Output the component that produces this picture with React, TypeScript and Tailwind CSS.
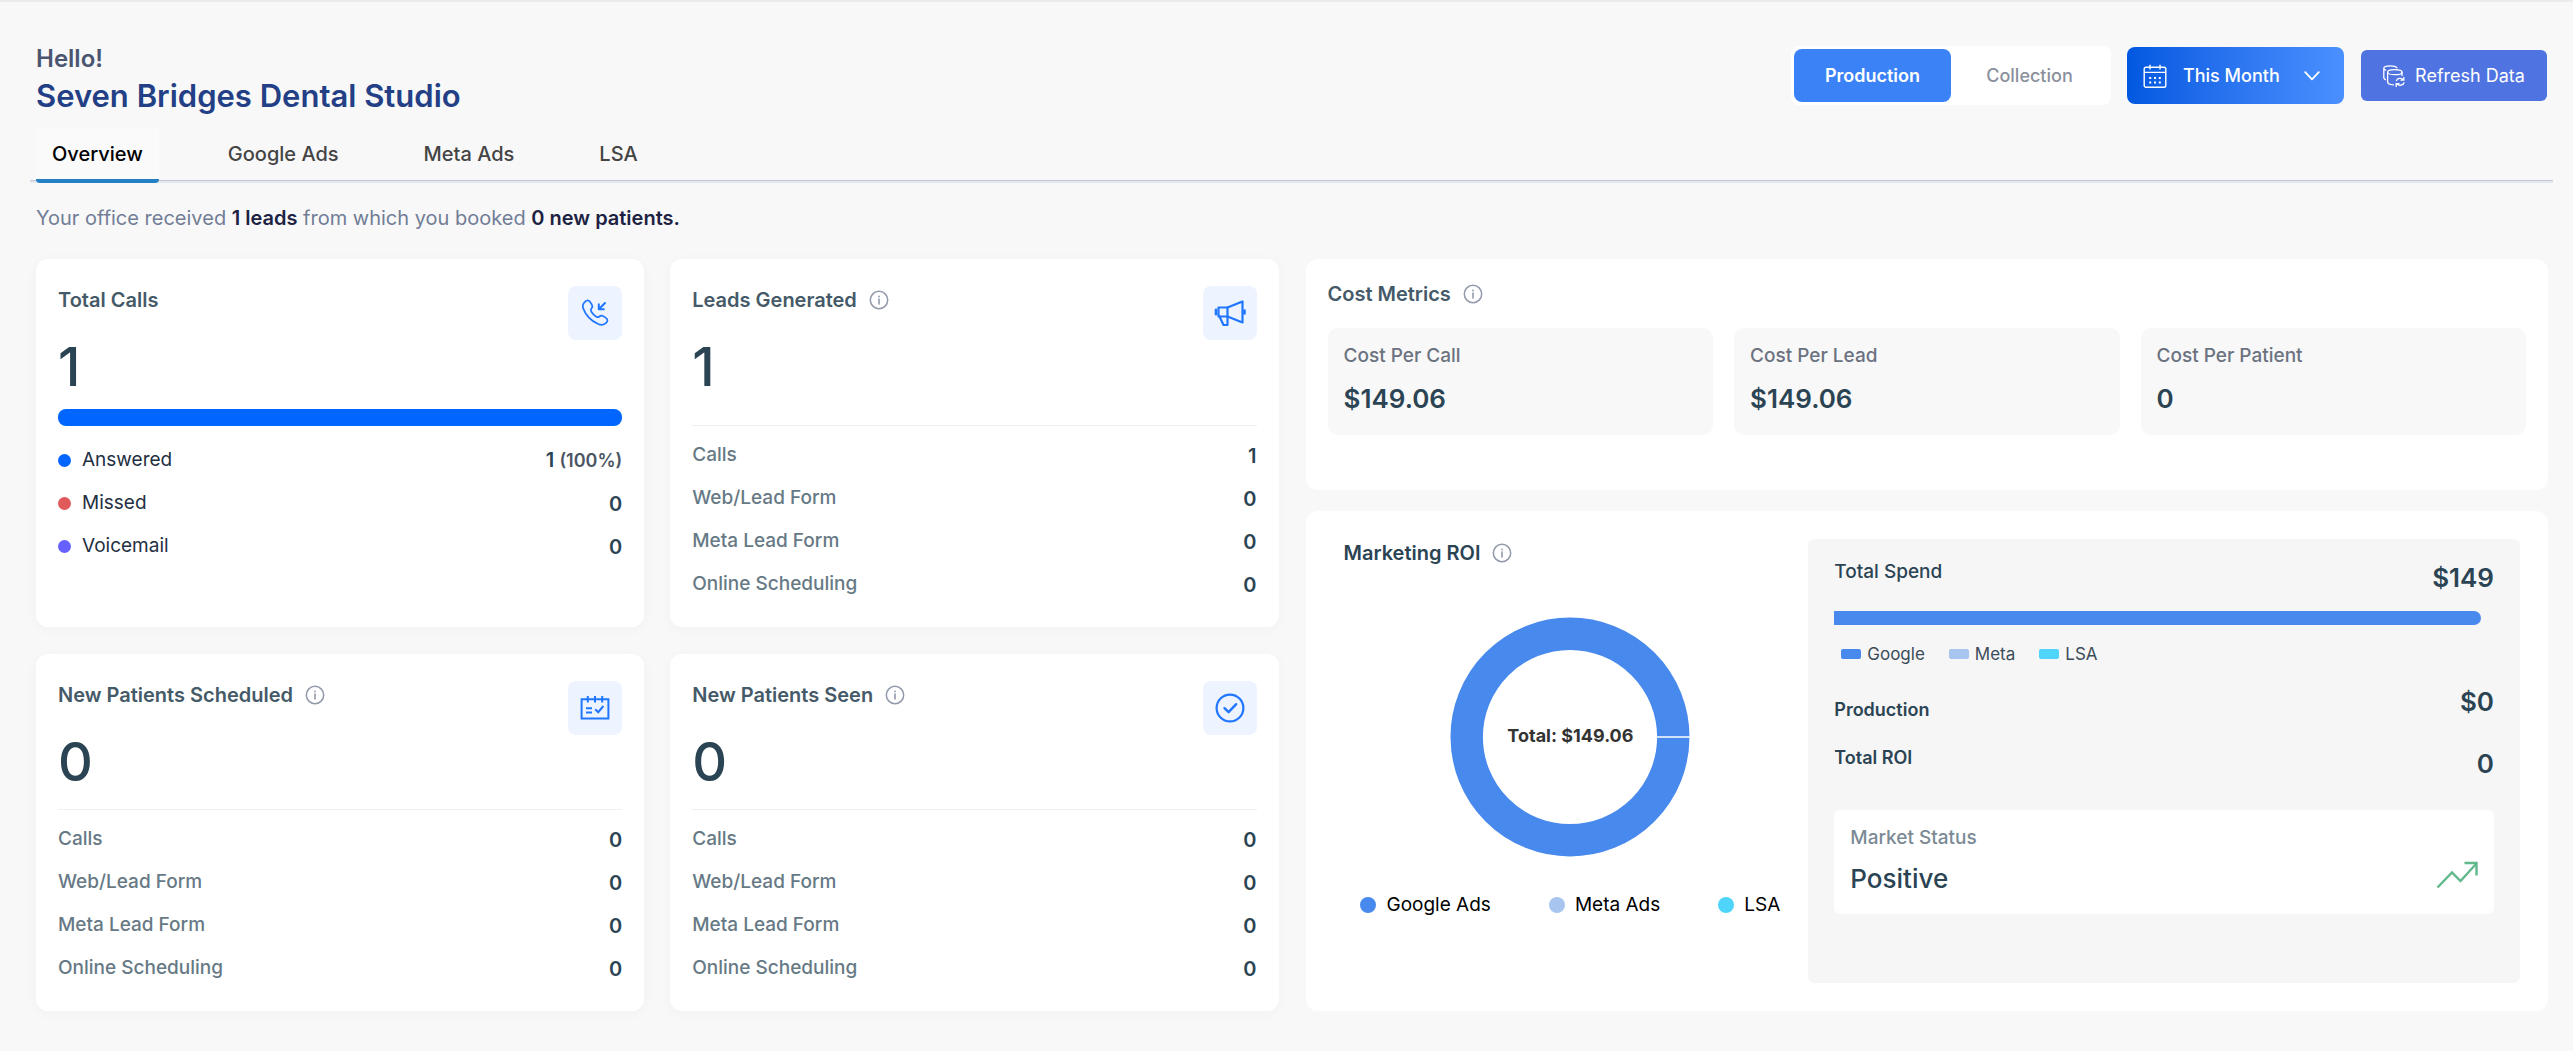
import React, { useState } from "react";

function InfoIcon() {
  return (
    <svg className="size-5 shrink-0 text-[#9299aa]" viewBox="0 0 20 20" fill="none" stroke="currentColor" aria-hidden="true">
      <circle cx="10" cy="10" r="8.7" strokeWidth="1.5" />
      <path d="M10 9v5" strokeWidth="1.6" strokeLinecap="round" />
      <circle cx="10" cy="6.4" r="0.9" fill="currentColor" stroke="none" />
    </svg>
  );
}

function PhoneIcon() {
  return (
    <svg className="size-[30px]" viewBox="0 0 30 30" fill="none" stroke="currentColor" strokeWidth="1.7" strokeLinecap="round" strokeLinejoin="round" aria-hidden="true">
      <path d="M5.2 3.6C6.7 1.9 8.6 1.9 9.8 3.6L11.9 6.7C12.8 8.1 12.5 9.2 11.5 10.4C10.5 11.5 10.5 12.3 11.2 13.5C12.6 15.9 14.4 17.7 16.6 18.9C17.8 19.5 18.4 19.4 19.4 18.5C20.6 17.4 21.9 17.2 23.3 18.1L26.2 20.1C27.9 21.3 27.8 23.2 26.4 24.6C24.3 26.8 21.3 27.4 18.2 26C10.9 22.8 5.6 16.9 3.1 10.1C2.2 7.6 3.3 5.3 5.2 3.6Z" />
      <path d="M25 5L19 11M18.8 6.2V11.2H23.8" strokeWidth="2" />
    </svg>
  );
}

function MegaphoneIcon() {
  return (
    <svg className="size-8" viewBox="0 0 32 32" fill="none" stroke="currentColor" strokeWidth="2.2" strokeLinejoin="round" strokeLinecap="round" aria-hidden="true">
      <path d="M13.5 10.5L28.5 4.5V25.5L13.5 19.5Z" />
      <path d="M13.5 10.5H4.5V19.5H13.5" />
      <path d="M5.5 19.5L9.5 28H13.5V19.5" />
      <path d="M2 12.8V17.2M30.5 13.5V16.5" strokeWidth="2.6" />
    </svg>
  );
}

function ScheduleIcon() {
  return (
    <svg className="size-[30px]" viewBox="0 0 30 30" fill="none" stroke="currentColor" strokeWidth="2" aria-hidden="true">
      <path d="M1.6 6.2H28.4V25.4H1.6Z" />
      <path d="M7.8 3V9.4M15 3V9.4M22.2 3V9.4" />
      <path d="M6 15.2H12M6 19.4H12M15.2 16.2L18.2 19.2L23.4 13" />
    </svg>
  );
}

function CheckCircleIcon() {
  return (
    <svg className="size-[30px]" viewBox="0 0 30 30" fill="none" stroke="currentColor" strokeWidth="2.2" strokeLinecap="round" strokeLinejoin="round" aria-hidden="true">
      <circle cx="15" cy="15" r="13.4" />
      <path d="M9.5 15.2L13.6 19.2L21.2 11.2" strokeWidth="2.4" />
    </svg>
  );
}

function CalendarIcon() {
  return (
    <svg className="size-6" viewBox="0 0 24 24" fill="none" stroke="currentColor" strokeWidth="1.4" aria-hidden="true">
      <rect x="1.2" y="3.2" width="21.6" height="20" rx="1.8" />
      <path d="M1.2 8.4H22.8M7 0.8V5.6M17 0.8V5.6" />
      <path d="M6.2 14H8.2M11 14H13M15.8 14H17.8M6.2 18.4H8.2M11 18.4H13M15.8 18.4H17.8" strokeWidth="2" />
    </svg>
  );
}

function RefreshDataIcon() {
  return (
    <svg className="size-[22px]" viewBox="0 0 22 22" fill="none" stroke="currentColor" strokeWidth="1.3" strokeLinecap="round" aria-hidden="true">
      <path d="M2.4 14.6C1.2 14 0.8 13.4 0.8 12.6V3.2C0.8 1.8 3.6 0.8 7.2 0.8C10.6 0.8 13.2 1.6 14 2.8M0.8 3.2C0.8 4 1.4 4.8 2.6 5.2" />
      <ellipse cx="11.8" cy="7.2" rx="7.2" ry="2.5" />
      <path d="M4.6 7.2V17C4.6 18.4 7 19.6 10.4 19.8M19 7.2V10.4" />
      <path d="M13.4 15.6C14.2 13.2 18.4 12.4 20.4 14.8M20.8 12.4V15.2H18M21 17.8C20.2 20.4 16.2 21.2 14 18.8M13.2 21.4V18.6H16" />
    </svg>
  );
}

function TrendIcon() {
  return (
    <svg className="h-7 w-[42px] text-[#60b88c]" viewBox="0 0 42 28" fill="none" stroke="currentColor" strokeWidth="2.4" aria-hidden="true">
      <path d="M1.5 26.5L16 11.5L24.5 20L40 3" />
      <path d="M28.5 2H40.5V14.5" />
    </svg>
  );
}

const tabs = ["Overview", "Google Ads", "Meta Ads", "LSA"];

type Entry = { label: string; value: string };

function StatHeader({ title, value, info, icon }: { title: string; value: string; info?: boolean; icon: React.ReactNode }) {
  return (
    <>
      <div className="flex items-start justify-between">
        <h2 className="flex items-center gap-3 text-[20px] leading-7 font-semibold text-[#455a68]">
          {title}
          {info && <InfoIcon />}
        </h2>
        <div className="flex size-[54px] items-center justify-center rounded-lg bg-[#edf4ff] text-[#2176ff]">{icon}</div>
      </div>
      <p className="text-[54px] leading-[54px] font-medium text-[#2b4454]">{value}</p>
    </>
  );
}

const cardClass = "flex flex-col rounded-xl bg-white px-[22px] pt-[27px] pb-5 shadow-[0_2px_14px_rgba(0,0,0,0.03)]";

function LeadCard({ title, value, entries, icon, spacer }: { title: string; value: string; entries: Entry[]; icon: React.ReactNode; spacer: string }) {
  return (
    <section className={cardClass}>
      <StatHeader title={title} value={value} info icon={icon} />
      <dl className={`${spacer} border-t border-[#eeeff0] pt-2 pb-px`}>
        {entries.map((e) => (
          <div key={e.label} className="flex h-[43px] items-center justify-between">
            <dt className="text-[19px] font-medium text-[#667985]">{e.label}</dt>
            <dd className="text-[20px] leading-7 font-semibold text-[#2b4454]">{e.value}</dd>
          </div>
        ))}
      </dl>
    </section>
  );
}

const makeEntries = (calls: string): Entry[] => [
  { label: "Calls", value: calls },
  { label: "Web/Lead Form", value: "0" },
  { label: "Meta Lead Form", value: "0" },
  { label: "Online Scheduling", value: "0" },
];

function CallRow({ dot, label, value, share }: { dot: string; label: string; value: string; share?: string }) {
  return (
    <div className="flex h-[43px] items-center justify-between">
      <dt className="flex items-center gap-[11px] text-[19px] text-[#232f42]">
        <span className={`size-[13px] rounded-full ${dot}`} />
        {label}
      </dt>
      <dd className="text-[20px] leading-7 font-semibold text-[#2b4454]">
        {value} {share && <span className="text-[18px] text-[#4b5563]">{share}</span>}
      </dd>
    </div>
  );
}

const costs: Entry[] = [
  { label: "Cost Per Call", value: "$149.06" },
  { label: "Cost Per Lead", value: "$149.06" },
  { label: "Cost Per Patient", value: "0" },
];

const chartLegend = [
  { label: "Google Ads", short: "Google", color: "bg-[#4889ed]" },
  { label: "Meta Ads", short: "Meta", color: "bg-[#a8c5ef]" },
  { label: "LSA", short: "LSA", color: "bg-[#50d5fa]" },
];

export default function App() {
  const [tab, setTab] = useState("Overview");
  const [mode, setMode] = useState("Production");

  return (
    <div className="min-h-screen border-t-2 border-[#ebebeb] bg-[#f8f8f8] pb-10 font-['Inter',sans-serif]">
      <header className="flex items-start justify-between pt-[43px] pr-[26px] pl-9">
        <div>
          <p className="text-[24px] leading-7 font-semibold text-[#4a5570]">Hello!</p>
          <h1 className="mt-[3px] text-[31px] leading-10 font-semibold text-[#233f85]">Seven Bridges Dental Studio</h1>
        </div>
        <div className="mt-px flex items-center">
          <div className="flex h-[59px] items-center rounded-lg bg-white p-[3px] text-[18px]">
            {["Production", "Collection"].map((m) => (
              <button
                key={m}
                type="button"
                onClick={() => setMode(m)}
                className={`h-[53px] w-[157px] rounded-lg ${mode === m ? "bg-[#3b82f6] font-semibold text-white" : "font-medium text-[#8a909c]"}`}
              >
                {m}
              </button>
            ))}
          </div>
          <button type="button" className="ml-4 flex h-[57px] w-[217px] items-center rounded-lg bg-linear-to-r from-[#0058e0] to-[#4a90ff] px-4 text-[18px] font-medium text-white">
            <CalendarIcon />
            <span className="ml-4">This Month</span>
            <svg className="mr-2 ml-auto h-[10px] w-4" viewBox="0 0 16 10" fill="none" stroke="currentColor" strokeWidth="1.8" strokeLinecap="round" strokeLinejoin="round" aria-hidden="true">
              <path d="M1.2 1.2L8 8.4L14.8 1.2" />
            </svg>
          </button>
          <button type="button" className="ml-[17px] flex h-[51px] w-[186px] items-center justify-center gap-[10px] rounded-md bg-[#5073e2] text-[18px] text-white">
            <RefreshDataIcon />
            Refresh Data
          </button>
        </div>
      </header>

      <nav className="mt-[11px] mr-5 ml-[30px] flex gap-[53px] px-[6px] shadow-[inset_0_-2px_0_#e4e7ed,inset_0_-3px_0_#c3c8d2]">
        {tabs.map((t) => (
          <button
            key={t}
            type="button"
            onClick={() => setTab(t)}
            className={`rounded-sm border-b-4 px-4 pt-[13px] pb-[11px] text-[20px] leading-7 font-medium ${tab === t ? "border-[#2580c3] bg-[#fafafa] text-black" : "border-transparent text-[#444444]"}`}
          >
            {t}
          </button>
        ))}
      </nav>

      <p className="mt-[21px] px-9 text-[20px] leading-7 text-[#717d96]">
        Your office received <strong className="font-semibold text-[#1d2243]">1 leads</strong> from which you booked{" "}
        <strong className="font-semibold text-[#1d2243]">0 new patients.</strong>
      </p>

      <main className="mt-[27px] grid grid-cols-2 gap-[27px] pr-[25px] pl-9">
        <div className="grid grid-cols-2 gap-x-[26px] gap-y-[27px]">
          <section className={cardClass}>
            <StatHeader title="Total Calls" value="1" icon={<PhoneIcon />} />
            <div className="mt-[15px] h-[17px] rounded-lg bg-[#0066ff]" />
            <dl className="mt-[13px]">
              <CallRow dot="bg-[#0066ff]" label="Answered" value="1" share="(100%)" />
              <CallRow dot="bg-[#e05a5a]" label="Missed" value="0" />
              <CallRow dot="bg-[#6560ff]" label="Voicemail" value="0" />
            </dl>
          </section>
          <LeadCard title="Leads Generated" value="1" entries={makeEntries("1")} icon={<MegaphoneIcon />} spacer="mt-[31px]" />
          <LeadCard title="New Patients Scheduled" value="0" entries={makeEntries("0")} icon={<ScheduleIcon />} spacer="mt-5" />
          <LeadCard title="New Patients Seen" value="0" entries={makeEntries("0")} icon={<CheckCircleIcon />} spacer="mt-5" />
        </div>

        <div className="flex flex-col gap-[21px]">
          <section className="rounded-xl bg-white px-[22px] pt-[21px] pb-[55px]">
            <h2 className="flex items-center gap-3 text-[20px] leading-7 font-semibold text-[#455a68]">
              Cost Metrics
              <InfoIcon />
            </h2>
            <dl className="mt-5 grid grid-cols-3 gap-[21px]">
              {costs.map((c) => (
                <div key={c.label} className="rounded-[10px] bg-[#f8f8f8] px-4 pt-[14px] pb-5">
                  <dt className="text-[19px] leading-7 font-medium text-[#6b7280]">{c.label}</dt>
                  <dd className="mt-[13px] text-[26px] leading-8 font-semibold text-[#2b4454]">{c.value}</dd>
                </div>
              ))}
            </dl>
          </section>

          <section className="grid flex-1 grid-cols-[454fr_712fr] gap-[11px] rounded-xl bg-white py-7 pr-7 pl-[38px]">
            <div>
              <h2 className="flex items-center gap-3 text-[20px] leading-7 font-semibold text-[#2b4454]">
                Marketing ROI
                <InfoIcon />
              </h2>
              <div className="mt-[50px] grid place-items-center">
                <svg className="col-start-1 row-start-1 size-60" viewBox="0 0 240 240" fill="none" aria-hidden="true">
                  <circle cx="120" cy="120" r="103.3" stroke="#4889ed" strokeWidth="32.4" />
                  <path d="M206 120H240" stroke="#ffffff" strokeWidth="1.4" />
                </svg>
                <p className="col-start-1 row-start-1 pb-1 text-[18px] font-bold text-[#333333]">Total: $149.06</p>
              </div>
              <ul className="mt-[34px] flex justify-center gap-[58px] text-[19px] leading-7 text-black">
                {chartLegend.map((l) => (
                  <li key={l.label} className="flex items-center gap-[10px]">
                    <span className={`size-4 rounded-full ${l.color}`} />
                    {l.label}
                  </li>
                ))}
              </ul>
            </div>

            <div className="rounded-md bg-[#f6f6f6] px-[26px] pt-[19px] text-[19px] text-[#2b4454]">
              <div className="flex items-start justify-between">
                <span className="leading-7 font-medium">Total Spend</span>
                <span className="text-[26px] leading-10 font-semibold">$149</span>
              </div>
              <div className="mt-[13px] mr-[13px] h-[14px] rounded-r-lg bg-[#4889ed]" />
              <ul className="mt-[17px] ml-[7px] flex gap-6 text-[17px] leading-6 text-[#3b4c59]">
                {chartLegend.map((l) => (
                  <li key={l.short} className="flex items-center gap-[6px]">
                    <span className={`h-[10px] w-5 rounded-xs ${l.color}`} />
                    {l.short}
                  </li>
                ))}
              </ul>
              <div className="mt-4 flex items-end justify-between">
                <span className="text-[18px] leading-6 font-semibold">Production</span>
                <span className="text-[26px] leading-10 font-semibold">$0</span>
              </div>
              <div className="mt-6 flex items-start justify-between">
                <span className="text-[18px] leading-6 font-semibold">Total ROI</span>
                <span className="text-[26px] leading-9 font-semibold">0</span>
              </div>
              <div className="mt-7 flex items-end justify-between rounded-md bg-white px-4 pt-[14px] pb-[19px]">
                <div>
                  <p className="leading-7 font-medium text-[#7b8a95]">Market Status</p>
                  <p className="mt-[11px] text-[26px] leading-8 font-medium">Positive</p>
                </div>
                <div className="pb-[6px]">
                  <TrendIcon />
                </div>
              </div>
            </div>
          </section>
        </div>
      </main>
    </div>
  );
}
